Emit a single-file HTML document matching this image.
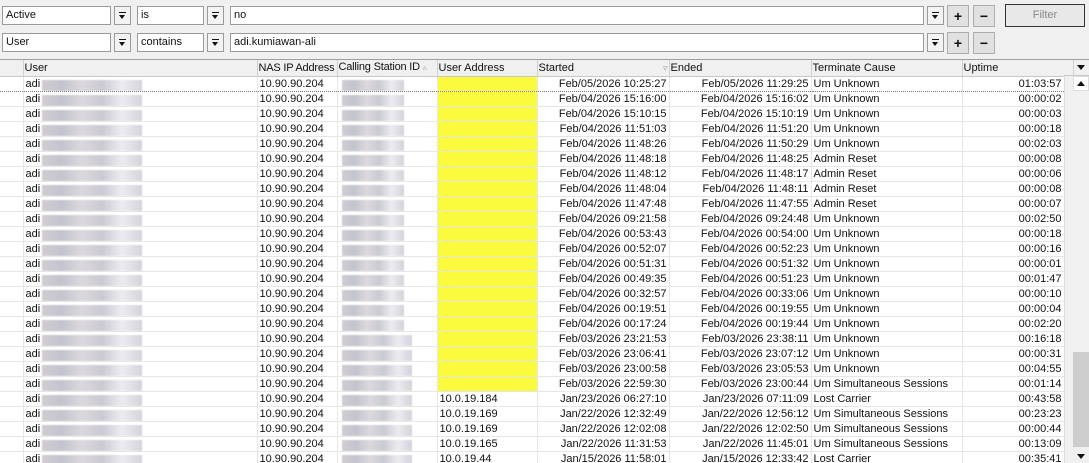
<!DOCTYPE html>
<html><head><meta charset="utf-8">
<style>
*{box-sizing:border-box;margin:0;padding:0}
body{width:1089px;height:463px;overflow:hidden;background:#f0f0f0;font-family:"Liberation Sans",Arial,sans-serif;font-size:11px;color:#111;position:relative}
.a{position:absolute}
.in{position:absolute;background:#fff;border:1px solid #9a9a9a;height:19px;line-height:17px;padding-left:3px;font-size:11px}
.dd{position:absolute;width:17px;height:19px;border:1px solid #9a9a9a;background:#f3f3f3;font-size:9px;text-align:center;line-height:17px}
.dd:before{content:"";position:absolute;left:4px;top:5px;width:7px;height:1px;background:#111}
.dd:after{content:"";position:absolute;left:4px;top:8px;border-left:3.5px solid transparent;border-right:3.5px solid transparent;border-top:4px solid #111}
.pm{position:absolute;width:22px;height:22px;border:1px solid #adadad;background:#e1e1e1;text-align:center;line-height:20px;font-weight:bold;font-size:14px}
#grid{position:absolute;left:0;top:59px;width:1064px;height:404px;background:#fff;border-top:1px solid #a0a0a0;overflow:hidden}
table{border-collapse:collapse;table-layout:fixed;position:absolute;left:0;top:0;width:1064px}
td,th{height:15px;line-height:14px;white-space:nowrap;overflow:hidden;border-right:1px solid #e6e6e6;border-bottom:1px solid #e6e6e6;padding:0 2px;font-weight:normal;text-align:left}
th{background:#f0f0f0;border-right:1px solid #d0d0d0;border-bottom:1px solid #c8c8c8;height:16px;padding:0 1px}
td.r{text-align:right}
td.y{background:#fbfb3e}
td.b{position:relative}
.bl{position:absolute;top:3px;height:11px;background:linear-gradient(90deg,#d2ccd2 0,#c4c4cf 20%,#dcd8dc 40%,#cacad3 60%,#ececf0 80%,#d3d3db 100%);filter:blur(0.6px)}
tr.first td{border-bottom:1px dotted #777}
</style></head><body>
<div class="in" style="left:2px;top:6px;width:109px">Active</div><div class="dd" style="left:114px;top:6px"></div>
<div class="in" style="left:137px;top:6px;width:67px">is</div><div class="dd" style="left:207px;top:6px"></div>
<div class="in" style="left:230px;top:6px;width:694px">no</div><div class="dd" style="left:927px;top:6px"></div>
<div class="pm" style="left:947px;top:5px">+</div><div class="pm" style="left:973px;top:5px">−</div>
<div class="a" style="left:1005px;top:4px;width:80px;height:23px;border:1px solid #333;background:#e8e8e8;color:#888;text-align:center;line-height:21px;font-size:11px">Filter</div>
<div class="in" style="left:2px;top:33px;width:109px">User</div><div class="dd" style="left:114px;top:33px"></div>
<div class="in" style="left:137px;top:33px;width:67px">contains</div><div class="dd" style="left:207px;top:33px"></div>
<div class="in" style="left:230px;top:33px;width:694px">adi.kumiawan-ali</div><div class="dd" style="left:927px;top:33px"></div>
<div class="pm" style="left:947px;top:32px">+</div><div class="pm" style="left:973px;top:32px">−</div>

<div id="grid">
<table>
<colgroup><col style="width:23px"><col style="width:234px"><col style="width:80px"><col style="width:100px"><col style="width:100px"><col style="width:132px"><col style="width:142px"><col style="width:151px"><col style="width:102px"></colgroup>
<tr><th></th><th>User</th><th style="letter-spacing:-0.2px">NAS IP Address</th><th style="letter-spacing:-0.2px">Calling Station ID <span style="color:#aaa;font-size:8px">▵</span></th><th>User Address</th><th>Started <span style="float:right;color:#999;font-size:9px">▿</span></th><th>Ended</th><th>Terminate Cause</th><th>Uptime</th></tr>
<tr class="first"><td></td><td class="b">adi<div class="bl" style="left:18px;width:100px"></div></td><td>10.90.90.204</td><td class="b"><div class="bl" style="left:4px;width:62px"></div></td><td class="y"></td><td class="r">Feb/05/2026 10:25:27</td><td class="r">Feb/05/2026 11:29:25</td><td>Um Unknown</td><td class="r">01:03:57</td></tr>
<tr><td></td><td class="b">adi<div class="bl" style="left:18px;width:100px"></div></td><td>10.90.90.204</td><td class="b"><div class="bl" style="left:4px;width:62px"></div></td><td class="y"></td><td class="r">Feb/04/2026 15:16:00</td><td class="r">Feb/04/2026 15:16:02</td><td>Um Unknown</td><td class="r">00:00:02</td></tr>
<tr><td></td><td class="b">adi<div class="bl" style="left:18px;width:100px"></div></td><td>10.90.90.204</td><td class="b"><div class="bl" style="left:4px;width:62px"></div></td><td class="y"></td><td class="r">Feb/04/2026 15:10:15</td><td class="r">Feb/04/2026 15:10:19</td><td>Um Unknown</td><td class="r">00:00:03</td></tr>
<tr><td></td><td class="b">adi<div class="bl" style="left:18px;width:100px"></div></td><td>10.90.90.204</td><td class="b"><div class="bl" style="left:4px;width:62px"></div></td><td class="y"></td><td class="r">Feb/04/2026 11:51:03</td><td class="r">Feb/04/2026 11:51:20</td><td>Um Unknown</td><td class="r">00:00:18</td></tr>
<tr><td></td><td class="b">adi<div class="bl" style="left:18px;width:100px"></div></td><td>10.90.90.204</td><td class="b"><div class="bl" style="left:4px;width:62px"></div></td><td class="y"></td><td class="r">Feb/04/2026 11:48:26</td><td class="r">Feb/04/2026 11:50:29</td><td>Um Unknown</td><td class="r">00:02:03</td></tr>
<tr><td></td><td class="b">adi<div class="bl" style="left:18px;width:100px"></div></td><td>10.90.90.204</td><td class="b"><div class="bl" style="left:4px;width:62px"></div></td><td class="y"></td><td class="r">Feb/04/2026 11:48:18</td><td class="r">Feb/04/2026 11:48:25</td><td>Admin Reset</td><td class="r">00:00:08</td></tr>
<tr><td></td><td class="b">adi<div class="bl" style="left:18px;width:100px"></div></td><td>10.90.90.204</td><td class="b"><div class="bl" style="left:4px;width:62px"></div></td><td class="y"></td><td class="r">Feb/04/2026 11:48:12</td><td class="r">Feb/04/2026 11:48:17</td><td>Admin Reset</td><td class="r">00:00:06</td></tr>
<tr><td></td><td class="b">adi<div class="bl" style="left:18px;width:100px"></div></td><td>10.90.90.204</td><td class="b"><div class="bl" style="left:4px;width:62px"></div></td><td class="y"></td><td class="r">Feb/04/2026 11:48:04</td><td class="r">Feb/04/2026 11:48:11</td><td>Admin Reset</td><td class="r">00:00:08</td></tr>
<tr><td></td><td class="b">adi<div class="bl" style="left:18px;width:100px"></div></td><td>10.90.90.204</td><td class="b"><div class="bl" style="left:4px;width:62px"></div></td><td class="y"></td><td class="r">Feb/04/2026 11:47:48</td><td class="r">Feb/04/2026 11:47:55</td><td>Admin Reset</td><td class="r">00:00:07</td></tr>
<tr><td></td><td class="b">adi<div class="bl" style="left:18px;width:100px"></div></td><td>10.90.90.204</td><td class="b"><div class="bl" style="left:4px;width:62px"></div></td><td class="y"></td><td class="r">Feb/04/2026 09:21:58</td><td class="r">Feb/04/2026 09:24:48</td><td>Um Unknown</td><td class="r">00:02:50</td></tr>
<tr><td></td><td class="b">adi<div class="bl" style="left:18px;width:100px"></div></td><td>10.90.90.204</td><td class="b"><div class="bl" style="left:4px;width:62px"></div></td><td class="y"></td><td class="r">Feb/04/2026 00:53:43</td><td class="r">Feb/04/2026 00:54:00</td><td>Um Unknown</td><td class="r">00:00:18</td></tr>
<tr><td></td><td class="b">adi<div class="bl" style="left:18px;width:100px"></div></td><td>10.90.90.204</td><td class="b"><div class="bl" style="left:4px;width:62px"></div></td><td class="y"></td><td class="r">Feb/04/2026 00:52:07</td><td class="r">Feb/04/2026 00:52:23</td><td>Um Unknown</td><td class="r">00:00:16</td></tr>
<tr><td></td><td class="b">adi<div class="bl" style="left:18px;width:100px"></div></td><td>10.90.90.204</td><td class="b"><div class="bl" style="left:4px;width:62px"></div></td><td class="y"></td><td class="r">Feb/04/2026 00:51:31</td><td class="r">Feb/04/2026 00:51:32</td><td>Um Unknown</td><td class="r">00:00:01</td></tr>
<tr><td></td><td class="b">adi<div class="bl" style="left:18px;width:100px"></div></td><td>10.90.90.204</td><td class="b"><div class="bl" style="left:4px;width:62px"></div></td><td class="y"></td><td class="r">Feb/04/2026 00:49:35</td><td class="r">Feb/04/2026 00:51:23</td><td>Um Unknown</td><td class="r">00:01:47</td></tr>
<tr><td></td><td class="b">adi<div class="bl" style="left:18px;width:100px"></div></td><td>10.90.90.204</td><td class="b"><div class="bl" style="left:4px;width:62px"></div></td><td class="y"></td><td class="r">Feb/04/2026 00:32:57</td><td class="r">Feb/04/2026 00:33:06</td><td>Um Unknown</td><td class="r">00:00:10</td></tr>
<tr><td></td><td class="b">adi<div class="bl" style="left:18px;width:100px"></div></td><td>10.90.90.204</td><td class="b"><div class="bl" style="left:4px;width:62px"></div></td><td class="y"></td><td class="r">Feb/04/2026 00:19:51</td><td class="r">Feb/04/2026 00:19:55</td><td>Um Unknown</td><td class="r">00:00:04</td></tr>
<tr><td></td><td class="b">adi<div class="bl" style="left:18px;width:100px"></div></td><td>10.90.90.204</td><td class="b"><div class="bl" style="left:4px;width:62px"></div></td><td class="y"></td><td class="r">Feb/04/2026 00:17:24</td><td class="r">Feb/04/2026 00:19:44</td><td>Um Unknown</td><td class="r">00:02:20</td></tr>
<tr><td></td><td class="b">adi<div class="bl" style="left:18px;width:100px"></div></td><td>10.90.90.204</td><td class="b"><div class="bl" style="left:4px;width:70px"></div></td><td class="y"></td><td class="r">Feb/03/2026 23:21:53</td><td class="r">Feb/03/2026 23:38:11</td><td>Um Unknown</td><td class="r">00:16:18</td></tr>
<tr><td></td><td class="b">adi<div class="bl" style="left:18px;width:100px"></div></td><td>10.90.90.204</td><td class="b"><div class="bl" style="left:4px;width:70px"></div></td><td class="y"></td><td class="r">Feb/03/2026 23:06:41</td><td class="r">Feb/03/2026 23:07:12</td><td>Um Unknown</td><td class="r">00:00:31</td></tr>
<tr><td></td><td class="b">adi<div class="bl" style="left:18px;width:100px"></div></td><td>10.90.90.204</td><td class="b"><div class="bl" style="left:4px;width:70px"></div></td><td class="y"></td><td class="r">Feb/03/2026 23:00:58</td><td class="r">Feb/03/2026 23:05:53</td><td>Um Unknown</td><td class="r">00:04:55</td></tr>
<tr><td></td><td class="b">adi<div class="bl" style="left:18px;width:100px"></div></td><td>10.90.90.204</td><td class="b"><div class="bl" style="left:4px;width:70px"></div></td><td class="y"></td><td class="r">Feb/03/2026 22:59:30</td><td class="r">Feb/03/2026 23:00:44</td><td>Um Simultaneous Sessions</td><td class="r">00:01:14</td></tr>
<tr><td></td><td class="b">adi<div class="bl" style="left:18px;width:100px"></div></td><td>10.90.90.204</td><td class="b"><div class="bl" style="left:4px;width:70px"></div></td><td>10.0.19.184</td><td class="r">Jan/23/2026 06:27:10</td><td class="r">Jan/23/2026 07:11:09</td><td>Lost Carrier</td><td class="r">00:43:58</td></tr>
<tr><td></td><td class="b">adi<div class="bl" style="left:18px;width:100px"></div></td><td>10.90.90.204</td><td class="b"><div class="bl" style="left:4px;width:70px"></div></td><td>10.0.19.169</td><td class="r">Jan/22/2026 12:32:49</td><td class="r">Jan/22/2026 12:56:12</td><td>Um Simultaneous Sessions</td><td class="r">00:23:23</td></tr>
<tr><td></td><td class="b">adi<div class="bl" style="left:18px;width:100px"></div></td><td>10.90.90.204</td><td class="b"><div class="bl" style="left:4px;width:70px"></div></td><td>10.0.19.169</td><td class="r">Jan/22/2026 12:02:08</td><td class="r">Jan/22/2026 12:02:50</td><td>Um Simultaneous Sessions</td><td class="r">00:00:44</td></tr>
<tr><td></td><td class="b">adi<div class="bl" style="left:18px;width:100px"></div></td><td>10.90.90.204</td><td class="b"><div class="bl" style="left:4px;width:70px"></div></td><td>10.0.19.165</td><td class="r">Jan/22/2026 11:31:53</td><td class="r">Jan/22/2026 11:45:01</td><td>Um Simultaneous Sessions</td><td class="r">00:13:09</td></tr>
<tr><td></td><td class="b">adi<div class="bl" style="left:18px;width:100px"></div></td><td>10.90.90.204</td><td class="b"><div class="bl" style="left:4px;width:70px"></div></td><td>10.0.19.44</td><td class="r">Jan/15/2026 11:58:01</td><td class="r">Jan/15/2026 12:33:42</td><td>Lost Carrier</td><td class="r">00:35:41</td></tr>
</table>
</div>
<div class="a" style="left:1064px;top:59px;width:25px;height:17px;background:#f0f0f0;border-top:1px solid #a0a0a0;border-bottom:1px solid #c8c8c8"></div>
<div class="a" style="left:1073px;top:60px;width:16px;height:16px;border-left:1px solid #d0d0d0"></div>
<div class="a" style="left:1077px;top:65px;border-left:4px solid transparent;border-right:4px solid transparent;border-top:5px solid #111"></div>
<div class="a" style="left:1064px;top:76px;width:25px;height:387px;background:#f0f0f0;border-left:1px solid #dcdcdc"></div>
<div class="a" style="left:1073px;top:76px;width:16px;height:15px;background:#fff;border:1px solid #ddd"></div>
<div class="a" style="left:1077px;top:81px;border-left:4px solid transparent;border-right:4px solid transparent;border-bottom:5px solid #111"></div>
<div class="a" style="left:1073px;top:352px;width:16px;height:95px;background:#cdcdcd"></div>
<div class="a" style="left:1077px;top:454px;border-left:4px solid transparent;border-right:4px solid transparent;border-top:5px solid #111"></div>
</body></html>
